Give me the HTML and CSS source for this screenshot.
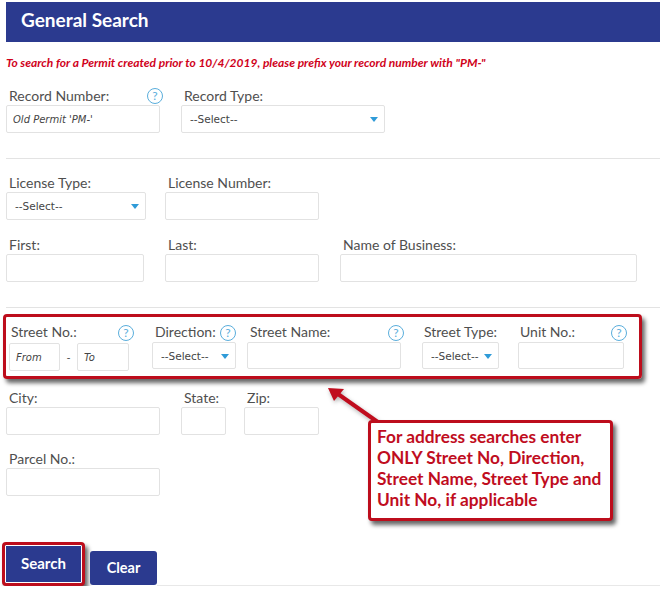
FILE: index.html
```html
<!DOCTYPE html>
<html lang="en">
<head>
    <meta charset="UTF-8">
    <title>General Search</title>
    <link rel="stylesheet" href="styles.css">
</head>
<body>
    <div class="page">
        <h1 class="band">General Search</h1>
        <p class="note">To search for a Permit created prior to 10/4/2019, please prefix your record number with "PM-"</p>

        <div class="row row-first">
            <div class="field w-154">
                <div class="label">Record Number: <span class="help">?</span></div>
                <input type="text" placeholder="Old Permit 'PM-'">
            </div>
            <div class="field w-204">
                <div class="label">Record Type:</div>
                <div class="select"><select><option>--Select--</option></select></div>
            </div>
        </div>
        <hr class="rule">

        <div class="row row-license">
            <div class="field w-140">
                <div class="label">License Type:</div>
                <div class="select"><select><option>--Select--</option></select></div>
            </div>
            <div class="field w-154">
                <div class="label">License Number:</div>
                <input type="text">
            </div>
        </div>
        <div class="row row-name">
            <div class="field w-138">
                <div class="label">First:</div>
                <input type="text">
            </div>
            <div class="field w-154">
                <div class="label">Last:</div>
                <input type="text">
            </div>
            <div class="field w-297">
                <div class="label">Name of Business:</div>
                <input type="text">
            </div>
        </div>
        <hr class="rule">

        <div class="street-box">
            <div class="field w-120">
                <div class="label">Street No.: <span class="help help-wide">?</span></div>
                <div class="range">
                    <input type="text" placeholder="From">
                    <span class="dash">-</span>
                    <input type="text" placeholder="To">
                </div>
            </div>
            <div class="field w-84">
                <div class="label">Direction: <span class="help help-in">?</span></div>
                <div class="select"><select><option>--Select--</option></select></div>
            </div>
            <div class="field w-154">
                <div class="label">Street Name: <span class="help">?</span></div>
                <input type="text">
            </div>
            <div class="field w-77">
                <div class="label">Street Type:</div>
                <div class="select"><select><option>--Select--</option></select></div>
            </div>
            <div class="field w-106">
                <div class="label">Unit No.: <span class="help">?</span></div>
                <input type="text">
            </div>
        </div>

        <div class="row row-city">
            <div class="field w-154">
                <div class="label">City:</div>
                <input type="text">
            </div>
            <div class="field w-45">
                <div class="label">State:</div>
                <input type="text">
            </div>
            <div class="field w-75">
                <div class="label">Zip:</div>
                <input type="text">
            </div>
        </div>
        <div class="row row-parcel">
            <div class="field w-154">
                <div class="label">Parcel No.:</div>
                <input type="text">
            </div>
        </div>

        <div class="actions">
            <button class="btn btn-search">Search</button>
            <button class="btn btn-clear">Clear</button>
            <div class="actions-rule"></div>
        </div>
    </div>

    <!-- annotation drawn over the form -->
    <svg class="arrow" width="70" height="50" viewBox="0 0 70 50">
        <path d="M58 41 L14 10" fill="none" stroke="#c00d1e" stroke-width="4"/>
        <path d="M4 4 L20 5 L10 17 Z" fill="#c00d1e"/>
    </svg>
    <div class="callout">For address searches enter ONLY Street No, Direction, Street Name, Street Type and Unit No, if applicable</div>
</body>
</html>
```

FILE: styles.css
```css
body {
    margin: 0;
    font-family: 'Lato', 'Liberation Sans', sans-serif;
    background: #fff;
    color: #4f4f4f;
}
.page {
    padding: 2px 0 0 6px;
}
.band {
    margin: 0;
    height: 40px;
    line-height: 36px;
    padding-left: 15px;
    background: #2b3a8f;
    color: #fff;
    font-size: 19px;
    font-weight: 700;
}
.note {
    margin: 14px 0 17px 0;
    line-height: 14px;
    font-size: 12px;
    font-weight: 700;
    font-style: italic;
    color: #d0021b;
}
.row {
    display: flex;
}
.row-first { gap: 21px; }
.row-license { gap: 19px; margin-top: 15px; }
.row-name { gap: 21px; margin-top: 16px; }
.row-city { gap: 21px; margin-top: 10px; }
.row-city .w-75 { margin-left: -3px; }
.row-parcel { margin-top: 15px; }
.rule {
    margin: 25px 0 0 0;
    border: 0;
    border-top: 1px solid #e3e3e3;
}
.field { flex: none; }
.w-45 { width: 45px; }
.w-75 { width: 75px; }
.w-77 { width: 77px; }
.w-84 { width: 84px; }
.w-106 { width: 106px; }
.w-120 { width: 120px; }
.w-138 { width: 138px; }
.w-140 { width: 140px; }
.w-154 { width: 154px; }
.w-204 { width: 204px; }
.w-297 { width: 297px; }
.label {
    display: flex;
    justify-content: space-between;
    align-items: center;
    height: 18px;
    padding-left: 3px;
    font-size: 14px;
    line-height: 18px;
    white-space: nowrap;
}
.street-box .label {
    align-items: flex-start;
    height: 19px;
}
.street-box .help { margin-top: 2px; }
.street-box .w-120 .label,
.street-box .w-77 .label,
.street-box .w-106 .label { padding-left: 2px; }
.help {
    flex: none;
    box-sizing: border-box;
    width: 16px;
    height: 16px;
    margin-right: -3px;
    border: 1px solid #5aaedc;
    border-radius: 50%;
    color: #5aaedc;
    background: #fff;
    font-size: 12px;
    line-height: 14px;
    text-align: center;
}
.help-wide { margin-right: -5px; }
.help-in { margin-right: 0; }
input, select {
    display: block;
    box-sizing: border-box;
    width: 100%;
    height: 28px;
    border: 1px solid #e2e2e2;
    border-radius: 2px;
    background: #fff;
    font-family: 'DejaVu Sans', sans-serif;
    font-size: 10.5px;
    color: #444;
    outline: none;
}
input {
    padding: 0 6px;
}
input::placeholder {
    font-size: 10px;
    font-style: italic;
    color: #444;
    opacity: 1;
}
select {
    appearance: none;
    padding: 0 0 0 8px;
}
.select {
    position: relative;
}
.select::after {
    content: "";
    position: absolute;
    top: 12px;
    right: 7px;
    border-left: 4px solid transparent;
    border-right: 4px solid transparent;
    border-top: 5px solid #2f9bd8;
}
.street-box {
    display: flex;
    gap: 23px;
    box-sizing: border-box;
    width: 639px;
    height: 65px;
    margin: 6px 0 0 -3px;
    padding: 6px 0 0 3px;
    border: 3px solid #bd0d1c;
    border-radius: 4px;
    box-shadow: 3px 4px 4px rgba(0, 0, 0, 0.6);
}
.street-box .field > input,
.street-box select { height: 27px; }
.street-box .w-84 { margin-right: -12px; }
.street-box .w-154 { margin-right: -2px; }
.street-box .w-77 { margin-right: -4px; }
.range {
    display: flex;
    align-items: center;
    margin-top: 1px;
}
.range input:first-child { width: 51px; }
.range input:last-child { width: 52px; }
.dash {
    flex: none;
    width: 17px;
    text-align: center;
    font-size: 11px;
}
.actions {
    display: flex;
    align-items: flex-start;
    margin: 46px 0 0 -4px;
}
.btn {
    box-sizing: border-box;
    border: 0;
    padding: 0 0 2px 0;
    background: #2b3a8f;
    color: #fff;
    font-family: inherit;
    font-size: 15px;
    font-weight: 700;
}
.btn-search {
    width: 83px;
    height: 44px;
    border: 3px solid #bd0d1c;
    border-radius: 4px;
    outline: 1px solid #fff;
    outline-offset: -4px;
    box-shadow: 3px 4px 4px rgba(0, 0, 0, 0.6);
}
.btn-clear {
    width: 67px;
    height: 34px;
    margin: 9px 0 0 5px;
    border-radius: 3px;
    font-size: 14.5px;
}
.actions-rule {
    flex: 1;
    height: 43px;
    border-bottom: 1px solid #e8e8e8;
}
.arrow {
    position: absolute;
    left: 324px;
    top: 384px;
    filter: drop-shadow(1px 2px 2px rgba(0, 0, 0, 0.3));
}
.callout {
    position: absolute;
    left: 368px;
    top: 420px;
    box-sizing: border-box;
    width: 245px;
    height: 101px;
    padding: 3px 0 0 6px;
    border: 3px solid #bd0d1c;
    border-radius: 4px;
    background: #fff;
    box-shadow: 3px 4px 4px rgba(0, 0, 0, 0.6);
    color: #c00d1e;
    font-size: 17.3px;
    font-weight: 700;
    line-height: 21px;
}
```
